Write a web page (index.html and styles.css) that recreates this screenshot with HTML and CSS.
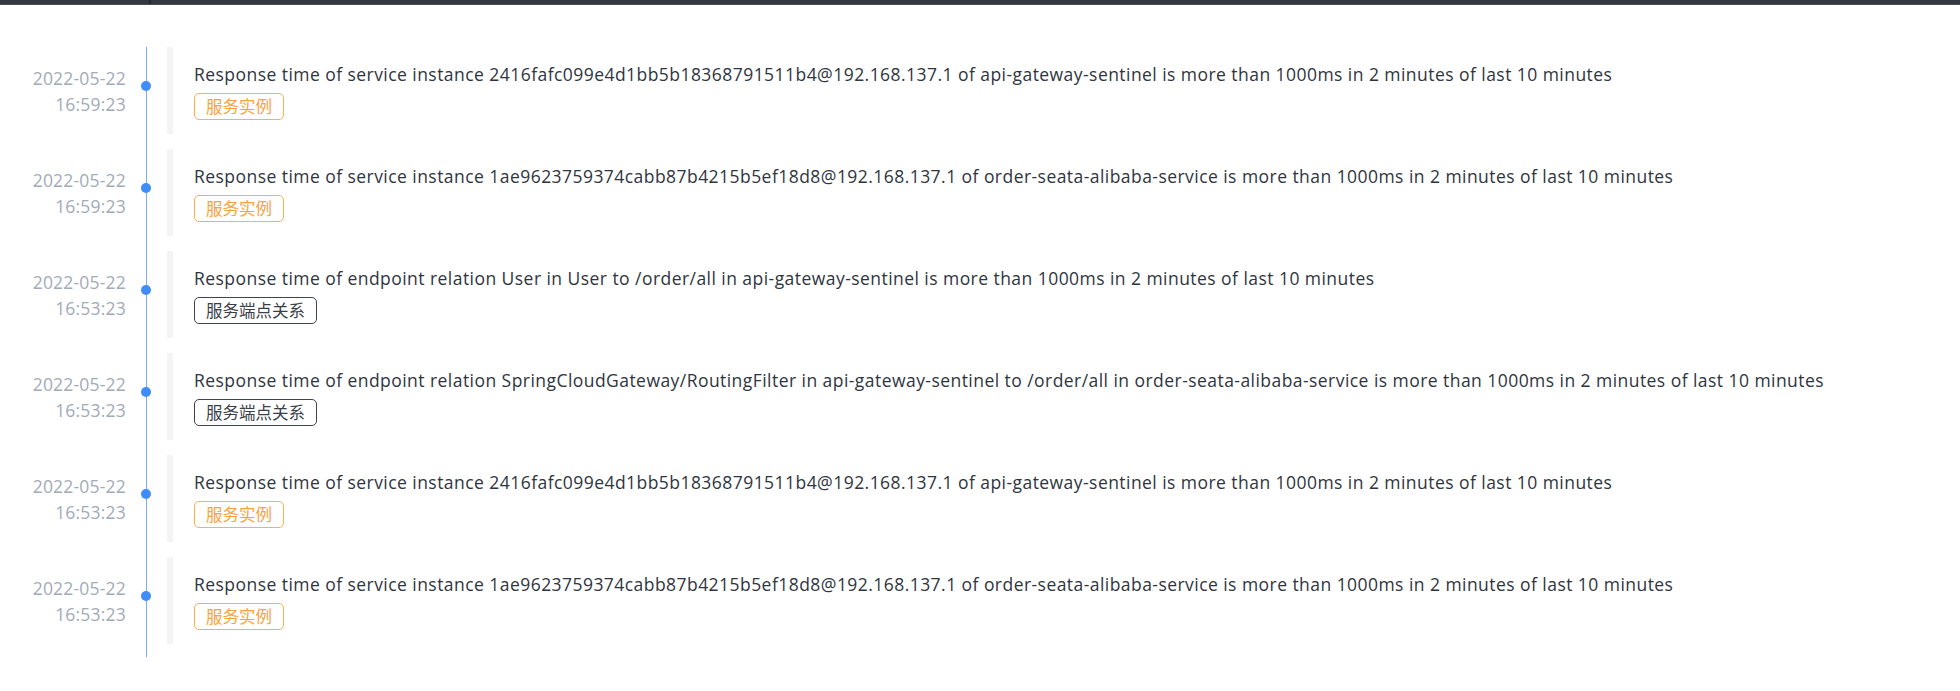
FILE: index.html
```html
<!DOCTYPE html>
<html lang="zh-CN">
<head>
<meta charset="utf-8">
<title>Alarm timeline</title>
<link rel="stylesheet" href="styles.css">
</head>
<body>
<div class="topbar"><div class="topbar-cell"></div><div class="topbar-rest"></div></div>
<ul class="timeline">
  <li class="item">
    <div class="time"><div>2022-05-22</div><div>16:59:23</div></div>
    <div class="axis"><span class="dot"></span></div>
    <div class="content">
      <div class="title">Response time of service instance 2416fafc099e4d1bb5b18368791511b4@192.168.137.1 of api-gateway-sentinel is more than 1000ms in 2 minutes of last 10 minutes</div>
      <span class="tag tag-instance">服务实例</span>
    </div>
  </li>
  <li class="item">
    <div class="time"><div>2022-05-22</div><div>16:59:23</div></div>
    <div class="axis"><span class="dot"></span></div>
    <div class="content">
      <div class="title">Response time of service instance 1ae9623759374cabb87b4215b5ef18d8@192.168.137.1 of order-seata-alibaba-service is more than 1000ms in 2 minutes of last 10 minutes</div>
      <span class="tag tag-instance">服务实例</span>
    </div>
  </li>
  <li class="item">
    <div class="time"><div>2022-05-22</div><div>16:53:23</div></div>
    <div class="axis"><span class="dot"></span></div>
    <div class="content">
      <div class="title">Response time of endpoint relation User in User to /order/all in api-gateway-sentinel is more than 1000ms in 2 minutes of last 10 minutes</div>
      <span class="tag tag-relation">服务端点关系</span>
    </div>
  </li>
  <li class="item">
    <div class="time"><div>2022-05-22</div><div>16:53:23</div></div>
    <div class="axis"><span class="dot"></span></div>
    <div class="content">
      <div class="title">Response time of endpoint relation SpringCloudGateway/RoutingFilter in api-gateway-sentinel to /order/all in order-seata-alibaba-service is more than 1000ms in 2 minutes of last 10 minutes</div>
      <span class="tag tag-relation">服务端点关系</span>
    </div>
  </li>
  <li class="item">
    <div class="time"><div>2022-05-22</div><div>16:53:23</div></div>
    <div class="axis"><span class="dot"></span></div>
    <div class="content">
      <div class="title">Response time of service instance 2416fafc099e4d1bb5b18368791511b4@192.168.137.1 of api-gateway-sentinel is more than 1000ms in 2 minutes of last 10 minutes</div>
      <span class="tag tag-instance">服务实例</span>
    </div>
  </li>
  <li class="item">
    <div class="time"><div>2022-05-22</div><div>16:53:23</div></div>
    <div class="axis"><span class="dot"></span></div>
    <div class="content">
      <div class="title">Response time of service instance 1ae9623759374cabb87b4215b5ef18d8@192.168.137.1 of order-seata-alibaba-service is more than 1000ms in 2 minutes of last 10 minutes</div>
      <span class="tag tag-instance">服务实例</span>
    </div>
  </li>
</ul>
</body>
</html>
```

FILE: styles.css
```css
html, body {
  margin: 0;
  padding: 0;
  background: #ffffff;
}
body {
  font-family: "Open Sans", "Noto Sans CJK SC", sans-serif;
  color: #2f3540;
}
.topbar {
  display: flex;
  height: 4px;
  background: #343740;
  border-bottom: 1px solid #4a4d55;
}
.topbar-cell {
  width: 149px;
  border-right: 2px solid #24262d;
}
.topbar-rest {
  flex: 1;
}
.timeline {
  list-style: none;
  margin: 42px 0 0 0;
  padding: 0 0 13px 0;
  background: linear-gradient(#7eaaf7, #7eaaf7) no-repeat 146px 0 / 1px 100%;
}
.item {
  display: flex;
  height: 87px;
  margin-bottom: 15px;
}
.item:last-child {
  margin-bottom: 0;
}
.time {
  width: 126px;
  flex: none;
  text-align: right;
  align-self: center;
  font-size: 17.5px;
  line-height: 26px;
  letter-spacing: 0.2px;
  color: #a3abb9;
}
.axis {
  width: 41px;
  flex: none;
  display: flex;
  justify-content: center;
  align-items: flex-start;
  padding-top: 34px;
  box-sizing: border-box;
  padding-right: 1px;
}
.dot {
  width: 10px;
  height: 10px;
  border-radius: 50%;
  background: #3f8cfb;
}
.content {
  flex: 1;
  border-left: 6px solid #f4f4f4;
  padding: 14px 0 0 21px;
  box-sizing: border-box;
}
.title {
  font-size: 17.5px;
  line-height: 26px;
  letter-spacing: 0.45px;
  white-space: nowrap;
}
.tag {
  display: inline-block;
  margin-top: 6px;
  height: 27px;
  box-sizing: border-box;
  padding: 0 11px;
  border: 1px solid;
  border-radius: 5px;
  font-family: "Noto Sans CJK SC", sans-serif;
  font-size: 16.5px;
  line-height: 25px;
}
.tag-instance {
  color: #f9a23e;
  border-color: #fbb04c;
}
.tag-relation {
  color: #3a3f48;
  border-color: #3f434b;
}
```
